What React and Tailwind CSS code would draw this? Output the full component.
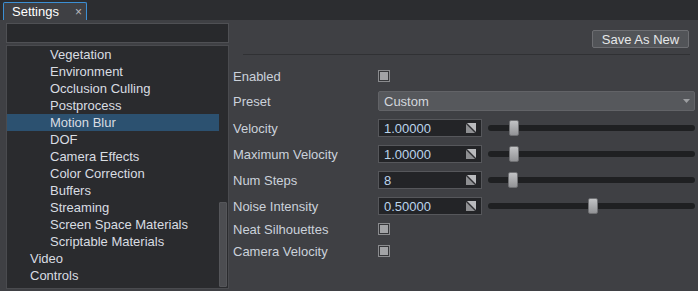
import React from "react";

const treeItems = [
  { label: "Vegetation", depth: 1 },
  { label: "Environment", depth: 1 },
  { label: "Occlusion Culling", depth: 1 },
  { label: "Postprocess", depth: 1 },
  { label: "Motion Blur", depth: 1, selected: true },
  { label: "DOF", depth: 1 },
  { label: "Camera Effects", depth: 1 },
  { label: "Color Correction", depth: 1 },
  { label: "Buffers", depth: 1 },
  { label: "Streaming", depth: 1 },
  { label: "Screen Space Materials", depth: 1 },
  { label: "Scriptable Materials", depth: 1 },
  { label: "Video", depth: 0 },
  { label: "Controls", depth: 0 },
];

const spinRows = [
  { label: "Velocity", value: "1.00000", handle: 21 },
  { label: "Maximum Velocity", value: "1.00000", handle: 21 },
  { label: "Num Steps", value: "8", handle: 20 },
  { label: "Noise Intensity", value: "0.50000", handle: 100 },
];

function Checkbox() {
  return (
    <div className="w-[12px] h-[12px] border border-[#8a8b8e] bg-[#36373a] p-px">
      <div className="w-full h-full bg-[#a2a3a6]" />
    </div>
  );
}

function SpinIcon() {
  return (
    <svg width="10" height="10" viewBox="0 0 10 10">
      <rect x="0" y="0" width="10" height="10" fill="#2e2f32" />
      <polygon points="1,0 10,0 10,9" fill="#b9babd" />
      <polygon points="0,1 0,10 9,10" fill="#8e8f92" />
    </svg>
  );
}

export default function App() {
  return (
    <div className="w-[698px] h-[291px] flex flex-col bg-[#3f4044] text-[13px] leading-none font-['Liberation_Sans',Arial,sans-serif] overflow-hidden">
      {/* Tab strip */}
      <div className="h-[20px] bg-[#2c2d30] flex items-end pl-[3px] shrink-0">
        <div className="w-[84px] h-[18px] bg-[#3f4044] border border-b-0 border-[#3c8fd4] rounded-t-[2px] flex items-center pl-[8px] pr-[4px] justify-between">
          <span className="text-white">Settings</span>
          <span className="text-[#b8babd] text-[12px]">×</span>
        </div>
      </div>

      <div className="flex-1 flex min-h-0">
        {/* Left tree */}
        <div className="w-[229px] shrink-0 flex flex-col pl-[6px] pt-[3px] pb-[2px] gap-[2px]">
          <div className="h-[20px] bg-[#28292c] border border-[#4f5054] shrink-0" />
          <div className="flex-1 bg-[#2a2b2e] border border-[#4a4b4f] flex min-h-0">
            <div className="flex-1 flex flex-col">
              {treeItems.map((item) => (
                <div
                  key={item.label}
                  className={`h-[17px] flex items-center shrink-0 ${
                    item.depth === 1 ? "pl-[43px]" : "pl-[23px]"
                  } ${
                    item.selected ? "bg-[#2c5170]" : ""
                  } text-[#d9dde2]`}
                >
                  {item.label}
                </div>
              ))}
            </div>
            <div className="w-[9px] flex flex-col justify-end pb-[1px] pr-px">
              <div className="h-[85px] bg-[#4c4d51] border border-[#55565a] rounded-[1px]" />
            </div>
          </div>
        </div>

        {/* Right panel */}
        <div className="flex-1 flex flex-col pl-[4px] text-[#cbd2db]">
          <div className="flex justify-end pt-[10px] pr-[9px]">
            <button className="w-[97px] h-[18px] bg-[#525458] border border-[#6d6e72] rounded-[2px] text-[#e6e8ea] flex items-center justify-center">
              Save As New
            </button>
          </div>

          <div className="mt-[6px] ml-[10px] mr-[8px] h-px bg-[#303134]" />

          <div className="flex flex-col">
            <div className="mt-[11px] h-[20px] flex items-center">
              <span className="w-[145px]">Enabled</span>
              <Checkbox />
            </div>

            <div className="mt-[5px] h-[20px] flex items-center">
              <span className="w-[145px]">Preset</span>
              <div className="flex-1 mr-[3px] h-[20px] bg-[#56585c] border border-[#626367] rounded-[2px] flex items-center justify-between pl-[5px] pr-[4px] text-[#d3d7dc]">
                <span>Custom</span>
                <svg width="7" height="4" viewBox="0 0 7 4">
                  <polygon points="0,0 7,0 3.5,4" fill="#9c9ea1" />
                </svg>
              </div>
            </div>

            {spinRows.map((row) => (
              <div key={row.label} className="mt-[8px] h-[18px] flex items-center">
                <span className="w-[145px]">{row.label}</span>
                <div className="w-[104px] h-[18px] bg-[#232427] border border-[#56575b] flex items-center justify-between pl-[5px] pr-[5px] text-[#bcd5ec]">
                  <span>{row.value}</span>
                  <SpinIcon />
                </div>
                <div className="flex-1 ml-[6px] mr-[3px] h-[6px] bg-[#1f2022] rounded-[3px] relative">
                  <div
                    className="absolute top-[-5px] w-[10px] h-[16px] rounded-[2px] bg-gradient-to-b from-[#c2c3c5] to-[#929396] border border-[#6f7073]"
                    style={{ left: row.handle }}
                  />
                </div>
              </div>
            ))}

            <div className="mt-[6px] h-[16px] flex items-center">
              <span className="w-[145px]">Neat Silhouettes</span>
              <Checkbox />
            </div>

            <div className="mt-[6px] h-[16px] flex items-center">
              <span className="w-[145px]">Camera Velocity</span>
              <Checkbox />
            </div>
          </div>
        </div>
      </div>
    </div>
  );
}
